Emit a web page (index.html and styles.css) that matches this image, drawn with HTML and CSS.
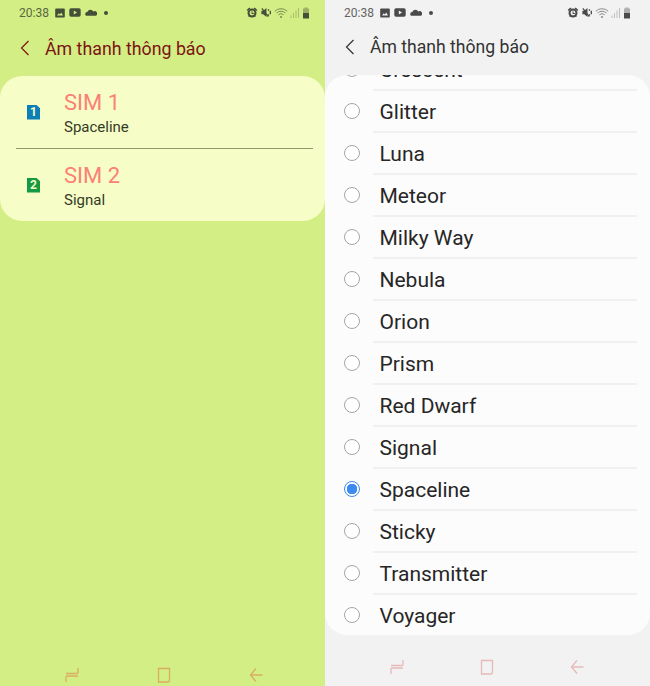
FILE: index.html
```html
<!DOCTYPE html>
<html lang="vi">
<head>
    <meta charset="UTF-8">
    <title>Âm thanh thông báo</title>
    <link rel="stylesheet" href="styles.css">
</head>
<body>
<svg class="sprites" width="0" height="0">
    <symbol id="i-photo" viewBox="0 0 10 10"><path fill="currentColor" fill-rule="evenodd" d="M1 .5h8a.8.8 0 0 1 .8.8v7.400a.8.8 0 0 1-.8.8H1a.8.8 0 0 1-.8-.8V1.300a.8.8 0 0 1 .8-.8zM2 7.500h6L6.200 4.600 4.800 6.400 3.800 5.300z"/></symbol>
    <symbol id="i-video" viewBox="0 0 12 10"><path fill="currentColor" fill-rule="evenodd" d="M2 .8h8A1.700 1.700 0 0 1 11.700 2.500v5A1.700 1.700 0 0 1 10 9.200H2A1.700 1.700 0 0 1 .3 7.500v-5A1.700 1.700 0 0 1 2 .8zM4.800 3v4L8 5z"/></symbol>
    <symbol id="i-cloud" viewBox="0 0 12 10"><path fill="currentColor" d="M1 8.200A2 2 0 0 1 2.300 4.600 3.200 3.200 0 0 1 8.300 4 2.400 2.400 0 0 1 11 8.200z"/></symbol>
    <symbol id="i-alarm" viewBox="0 0 12 12"><circle cx="6" cy="6.500" r="3.800" fill="none" stroke="currentColor" stroke-width="2.200"/><path fill="currentColor" d="M.2 3.200 3 .5l1.200 1L1.300 4.400zM11.800 3.200 9 .5l-1.200 1 2.900 2.900zM1.800 10.200l1.200-1.400 1 .9-1.200 1.300zM10.200 10.200 9 8.800l-1 .9 1.200 1.300zM5.500 4.500h1v2h1.500v1H5.500z"/></symbol>
    <symbol id="i-mute" viewBox="0 0 12 12"><path fill="currentColor" d="M1 4h2l3.500-3v10L3 8H1z"/><path fill="none" stroke="currentColor" stroke-width="1.400" d="M1.500 1.500l7 9"/><path fill="currentColor" d="M8 2.500h1.400v1.600H8zM10 4h1.400v4H10zM8 8h1.400v1.600H8z"/></symbol>
    <symbol id="i-wifi" viewBox="0 0 14 12"><path fill="none" stroke="currentColor" stroke-width="1" d="M.8 4.200a9 9 0 0 1 12.400 0M2.600 6a6.400 6.400 0 0 1 8.800 0M4.400 7.800a3.800 3.800 0 0 1 5.200 0"/><circle cx="7" cy="10" r="1.100" fill="currentColor"/></symbol>
    <symbol id="i-bars" viewBox="0 0 10 12"><path fill="currentColor" d="M.5 8.500h1V11h-1zM3 6h1v5H3zM5.500 3.500h1V11h-1zM8 1h1v10H8z"/></symbol>
    <symbol id="i-battery" viewBox="0 0 8 12"><path fill="currentColor" opacity=".4" d="M2.500.5h3v1H7v5H1v-5h1.500z"/><path fill="currentColor" d="M1 6h6v5.500H1z"/></symbol>
    <symbol id="i-back" viewBox="0 0 10 16"><path fill="none" stroke="currentColor" stroke-width="1.200" d="M8.500 1 1.500 8l7 7"/></symbol>
    <symbol id="i-recent" viewBox="0 0 14 16"><path fill="none" stroke="currentColor" stroke-width="1.300" d="M13 1v4.500a1 1 0 0 1-1 1H1M13 9H2a1 1 0 0 0-1 1v5"/></symbol>
    <symbol id="i-home" viewBox="0 0 14 16"><path fill="none" stroke="currentColor" stroke-width="1.300" d="M1.500 15V1.500h11V13a2 2 0 0 1-2 2z"/></symbol>
    <symbol id="i-nav-back" viewBox="0 0 14 16"><path fill="none" stroke="currentColor" stroke-width="1.300" d="M7 1.500 1.500 8 7 14.500M1.500 8H13.500"/></symbol>
</svg>

<div class="screens">
    <section class="phone phone-sim">
        <div class="status">
            <span class="time">20:38</span>
            <svg class="ic-s"><use href="#i-photo"/></svg>
            <svg class="ic-w"><use href="#i-video"/></svg>
            <svg class="ic-w"><use href="#i-cloud"/></svg>
            <span class="dot"></span>
            <div class="status-right">
                <svg class="ic-w"><use href="#i-alarm"/></svg>
                <svg class="ic-w"><use href="#i-mute"/></svg>
                <svg class="ic-wifi"><use href="#i-wifi"/></svg>
                <svg class="ic-bars"><use href="#i-bars"/></svg>
                <svg class="ic-batt"><use href="#i-battery"/></svg>
            </div>
        </div>
        <header class="title-bar">
            <svg class="back"><use href="#i-back"/></svg>
            <h1>Âm thanh thông báo</h1>
        </header>
        <div class="sim-card">
            <div class="sim-row">
                <span class="sim-badge sim-one">1</span>
                <div>
                    <div class="sim-name">SIM 1</div>
                    <div class="sim-tone">Spaceline</div>
                </div>
            </div>
            <div class="sim-line"></div>
            <div class="sim-row">
                <span class="sim-badge sim-two">2</span>
                <div>
                    <div class="sim-name">SIM 2</div>
                    <div class="sim-tone">Signal</div>
                </div>
            </div>
        </div>
        <nav class="softkeys">
            <svg><use href="#i-recent"/></svg>
            <svg><use href="#i-home"/></svg>
            <svg><use href="#i-nav-back"/></svg>
        </nav>
    </section>

    <section class="phone phone-list">
        <div class="status">
            <span class="time">20:38</span>
            <svg class="ic-s"><use href="#i-photo"/></svg>
            <svg class="ic-w"><use href="#i-video"/></svg>
            <svg class="ic-w"><use href="#i-cloud"/></svg>
            <span class="dot"></span>
            <div class="status-right">
                <svg class="ic-w"><use href="#i-alarm"/></svg>
                <svg class="ic-w"><use href="#i-mute"/></svg>
                <svg class="ic-wifi"><use href="#i-wifi"/></svg>
                <svg class="ic-bars"><use href="#i-bars"/></svg>
                <svg class="ic-batt"><use href="#i-battery"/></svg>
            </div>
        </div>
        <header class="title-bar">
            <svg class="back"><use href="#i-back"/></svg>
            <h1>Âm thanh thông báo</h1>
        </header>
        <div class="tone-card">
            <ul class="tones">
                <li><span class="radio"></span><span class="tone">Crescent</span></li>
                <li><span class="radio"></span><span class="tone">Glitter</span></li>
                <li><span class="radio"></span><span class="tone">Luna</span></li>
                <li><span class="radio"></span><span class="tone">Meteor</span></li>
                <li><span class="radio"></span><span class="tone">Milky Way</span></li>
                <li><span class="radio"></span><span class="tone">Nebula</span></li>
                <li><span class="radio"></span><span class="tone">Orion</span></li>
                <li><span class="radio"></span><span class="tone">Prism</span></li>
                <li><span class="radio"></span><span class="tone">Red Dwarf</span></li>
                <li><span class="radio"></span><span class="tone">Signal</span></li>
                <li><span class="radio checked"></span><span class="tone">Spaceline</span></li>
                <li><span class="radio"></span><span class="tone">Sticky</span></li>
                <li><span class="radio"></span><span class="tone">Transmitter</span></li>
                <li><span class="radio"></span><span class="tone">Voyager</span></li>
            </ul>
        </div>
        <nav class="softkeys">
            <svg><use href="#i-recent"/></svg>
            <svg><use href="#i-home"/></svg>
            <svg><use href="#i-nav-back"/></svg>
        </nav>
    </section>
</div>
</body>
</html>
```

FILE: styles.css
```css
* {
    margin: 0;
    padding: 0;
    box-sizing: border-box;
}

body {
    font-family: Roboto, "Liberation Sans", sans-serif;
    overflow: hidden;
}

ul {
    list-style: none;
}

.sprites {
    display: block;
    height: 0;
}

.screens {
    display: flex;
    width: 650px;
    height: 686px;
}

.phone {
    width: 325px;
    height: 686px;
    display: flex;
    flex-direction: column;
}

.phone-sim {
    background-color: #d2ee84;
    color: #7d1414;
}

.phone-list {
    background-color: #f2f2f2;
    color: #333;
}

/* status bar */
.status {
    height: 25px;
    padding: 0 19px;
    display: flex;
    align-items: center;
    gap: 4px;
    color: #454f38;
    font-size: 12px;
}

.phone-sim .status {
    padding-right: 15px;
}

.phone-list .status {
    color: #4a4a4a;
}

.time {
    margin-right: 2px;
    opacity: .85;
}

.ic-s {
    width: 10px;
    height: 10px;
}

.ic-w {
    width: 12px;
    height: 11px;
}

.dot {
    width: 4px;
    height: 4px;
    margin-left: 3px;
    border-radius: 50%;
    background-color: currentColor;
}

.status-right {
    margin-left: auto;
    display: flex;
    align-items: center;
    gap: 2px;
}

.ic-wifi {
    width: 14px;
    height: 12px;
    opacity: .6;
}

.ic-bars {
    width: 10px;
    height: 12px;
    opacity: .3;
}

.ic-batt {
    width: 8px;
    height: 12px;
}

/* title */
.title-bar {
    height: 50px;
    padding-left: 20px;
    padding-bottom: 6px;
    display: flex;
    align-items: center;
    gap: 15px;
}

.phone-sim .title-bar {
    height: 51px;
    padding-bottom: 5px;
}

.back {
    width: 10px;
    height: 16px;
}

.title-bar h1 {
    font-size: 17.600px;
    font-weight: 400;
}

.phone-sim .title-bar h1 {
    font-size: 17.800px;
}

/* sim list */
.sim-card {
    height: 145px;
    border-radius: 22px;
    background-color: #f6fdc6;
}

.sim-row {
    height: 72px;
    display: flex;
    align-items: center;
    gap: 24px;
    padding-left: 27px;
}

.sim-line {
    height: 1px;
    margin: 0 12px 0 16px;
    background-color: #8f9a6d;
}

.sim-badge {
    width: 13px;
    height: 15px;
    clip-path: polygon(0 0, 70% 0, 100% 25%, 100% 100%, 0 100%);
    color: #f6fdc6;
    font-size: 12px;
    font-weight: 700;
    line-height: 15px;
    text-align: center;
}

.sim-one {
    background-color: #0b7fb8;
}

.sim-two {
    background-color: #159a43;
}

.sim-name {
    margin-top: 2px;
    color: #fb8078;
    font-size: 22px;
    line-height: 28px;
}

.sim-tone {
    color: #333b26;
    font-size: 15px;
    line-height: 20px;
}

/* ringtone list */
.tone-card {
    height: 560px;
    border-radius: 22px;
    background-color: #fcfcfc;
    overflow: hidden;
}

.tones {
    margin-top: -26px;
}

.tones li {
    height: 42px;
    display: flex;
}

.radio {
    width: 16px;
    height: 16px;
    margin: 12px 0 0 19px;
    flex-shrink: 0;
    border: 1px solid #a6a6a6;
    border-radius: 50%;
    background-color: #fff;
}

.radio.checked {
    border-color: #3d8bf0;
    background: radial-gradient(circle, #3d8bf0 0 5px, #fff 5.500px);
}

.tone {
    flex: 1;
    margin: 0 13px 0 13px;
    padding: 1px 0 0 6.500px;
    border-bottom: 2px solid #f0f0f0;
    color: #262626;
    font-size: 21px;
    line-height: 40px;
}

.tones li:last-child .tone {
    border-bottom: 0;
}

/* soft keys */
.softkeys {
    margin-top: auto;
    display: flex;
    padding-left: 65px;
}

.softkeys svg {
    width: 14px;
    height: 16px;
}

.phone-sim .softkeys {
    gap: 78px;
    padding-bottom: 3px;
    color: #dbad63;
}

.phone-list .softkeys {
    gap: 76px;
    padding-bottom: 11px;
    color: #e8b9b9;
}
```
